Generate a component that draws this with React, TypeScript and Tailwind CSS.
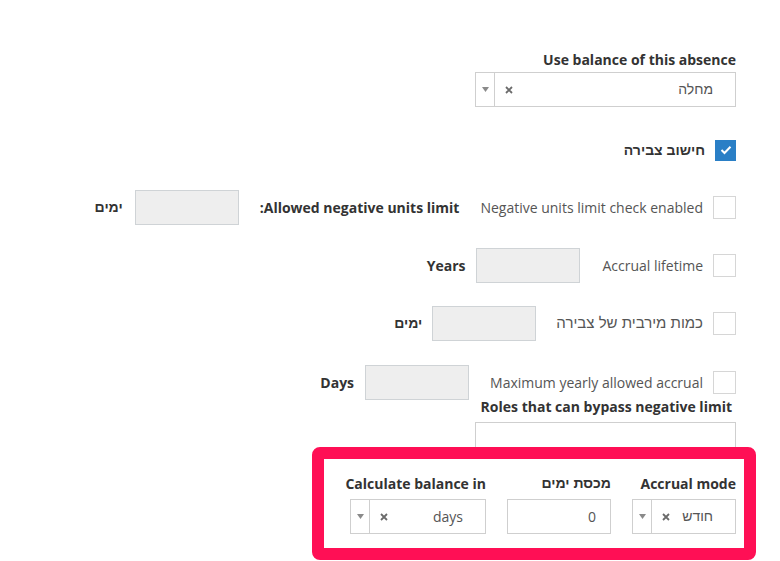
import React from "react";

// Hebrew strings use Arial-metric glyphs, Latin uses Open Sans
const he = "font-['Liberation_Sans','DejaVu_Sans',sans-serif]";

// small gray caret used by the select widgets
const Caret = () => (
  <svg width="7" height="5" viewBox="0 0 7 5" className="shrink-0">
    <path d="M0 0 L7 0 L3.5 5 Z" fill="#8a8a8a" />
  </svg>
);

const Clear = () => (
  <svg width="8" height="8" viewBox="0 0 8 8" className="shrink-0">
    <path d="M1 1 L7 7 M7 1 L1 7" stroke="#6b6b6b" strokeWidth="1.8" />
  </svg>
);

interface SelectProps {
  value: string;
  width: string;
  hebrew?: boolean;
}

const SelectBox: React.FC<SelectProps> = ({ value, width, hebrew }) => (
  <div className={`flex h-[35px] ${width} items-stretch border border-[#cfcfcf] bg-white`}>
    <span className={`flex flex-1 items-center pr-[22px] text-[14px] text-[#555] ${hebrew ? he : ""}`}>{value}</span>
    <span className="flex items-center pl-[10px]">
      <Clear />
    </span>
    <span className="flex w-[19px] items-center justify-center border-r border-[#cfcfcf]">
      <Caret />
    </span>
  </div>
);

const CheckBox: React.FC<{ checked?: boolean }> = ({ checked }) =>
  checked ? (
    <span className="flex h-[21px] w-[21px] items-center justify-center bg-[#2a7fc6]">
      <svg width="12" height="10" viewBox="0 0 12 10">
        <path d="M1.5 5 L4.5 8 L10.5 1.8" fill="none" stroke="#fff" strokeWidth="2" />
      </svg>
    </span>
  ) : (
    <span className="block h-[23px] w-[23px] border border-[#d6d6d6] bg-white" />
  );

const GrayInput: React.FC<{ className?: string }> = ({ className = "" }) => (
  <div className={`h-[35px] w-[104px] shrink-0 border border-[#cfd3d6] bg-[#eeeeee] ${className}`} />
);

const CheckRow: React.FC<{ label: string; hebrew?: boolean; children?: React.ReactNode; className?: string }> = ({
  label,
  hebrew,
  children,
  className = "",
}) => (
  <div className={`flex h-[35px] items-center ${className}`}>
    <CheckBox />
    <span className={`mr-[10px] text-[#555] ${hebrew ? `text-[15px] ${he}` : "text-[14px]"}`}>{label}</span>
    {children}
  </div>
);

export default function App() {
  return (
    <div
      dir="rtl"
      className="h-[561px] w-[780px] overflow-hidden bg-white pr-[44px] pt-[50px] font-['Open_Sans','Liberation_Sans',sans-serif]"
    >
      <div className="flex flex-col items-start">
        <div className="text-[14px] font-bold leading-[19px] text-[#333]">Use balance of this absence</div>
        <div className="mt-[3px]">
          <SelectBox value="מחלה" width="w-[261px]" hebrew />
        </div>

        <div className="mt-[32px] flex h-[22px] items-center">
          <CheckBox checked />
          <span className={`mr-[10px] text-[14px] font-bold text-[#333] ${he}`}>חישוב צבירה</span>
        </div>

        <CheckRow label="Negative units limit check enabled" className="mt-[29px]">
          <span className="mr-[21px] text-[14px] font-bold text-[#333]">Allowed negative units limit:</span>
          <GrayInput className="mr-[21px]" />
          <span className={`mr-[12px] text-[14px] font-bold text-[#333] ${he}`}>ימים</span>
        </CheckRow>

        <CheckRow label="Accrual lifetime" className="mt-[23px]">
          <GrayInput className="mr-[22px]" />
          <span className="mr-[11px] text-[14px] font-bold text-[#333]">Years</span>
        </CheckRow>

        <CheckRow label="כמות מירבית של צבירה" hebrew className="mt-[23px]">
          <GrayInput className="mr-[20px]" />
          <span className={`mr-[10px] text-[14px] font-bold text-[#333] ${he}`}>ימים</span>
        </CheckRow>

        <CheckRow label="Maximum yearly allowed accrual" className="mt-[24px]">
          <GrayInput className="mr-[21px]" />
          <span className="mr-[11px] text-[14px] font-bold text-[#333]">Days</span>
        </CheckRow>

        <div className="-mt-[3px] mr-[4px] text-[14px] font-bold leading-[19px] text-[#333]">
          Roles that can bypass negative limit
        </div>
        <div className="mt-[6px] h-[36px] w-[261px] border border-[#cfcfcf] bg-white" />

        {/* highlighted accrual settings row */}
        <div className="-mr-[20px] -mt-[11px] w-[444px] rounded-[8px] border-[12px] border-[#ff0f55] bg-white pb-[14px] pr-[8px] pt-[15px]">
          <div className="flex gap-[21px]">
            <div className="flex flex-col items-start">
              <span className="text-[14px] font-bold leading-[19px] text-[#333]">Accrual mode</span>
              <div className="mt-[6px]">
                <SelectBox value="חודש" width="w-[104px]" hebrew />
              </div>
            </div>
            <div className="flex flex-col items-start">
              <span className={`text-[14px] font-bold leading-[19px] text-[#333] ${he}`}>מכסת ימים</span>
              <div className="mt-[6px] flex h-[35px] w-[104px] items-center border border-[#cfcfcf] bg-white pr-[14px] text-[14px] text-[#555]">
                0
              </div>
            </div>
            <div className="flex flex-col items-start">
              <span className="text-[14px] font-bold leading-[19px] text-[#333]">Calculate balance in</span>
              <div className="mt-[6px]">
                <SelectBox value="days" width="w-[136px]" />
              </div>
            </div>
          </div>
        </div>
      </div>
    </div>
  );
}
